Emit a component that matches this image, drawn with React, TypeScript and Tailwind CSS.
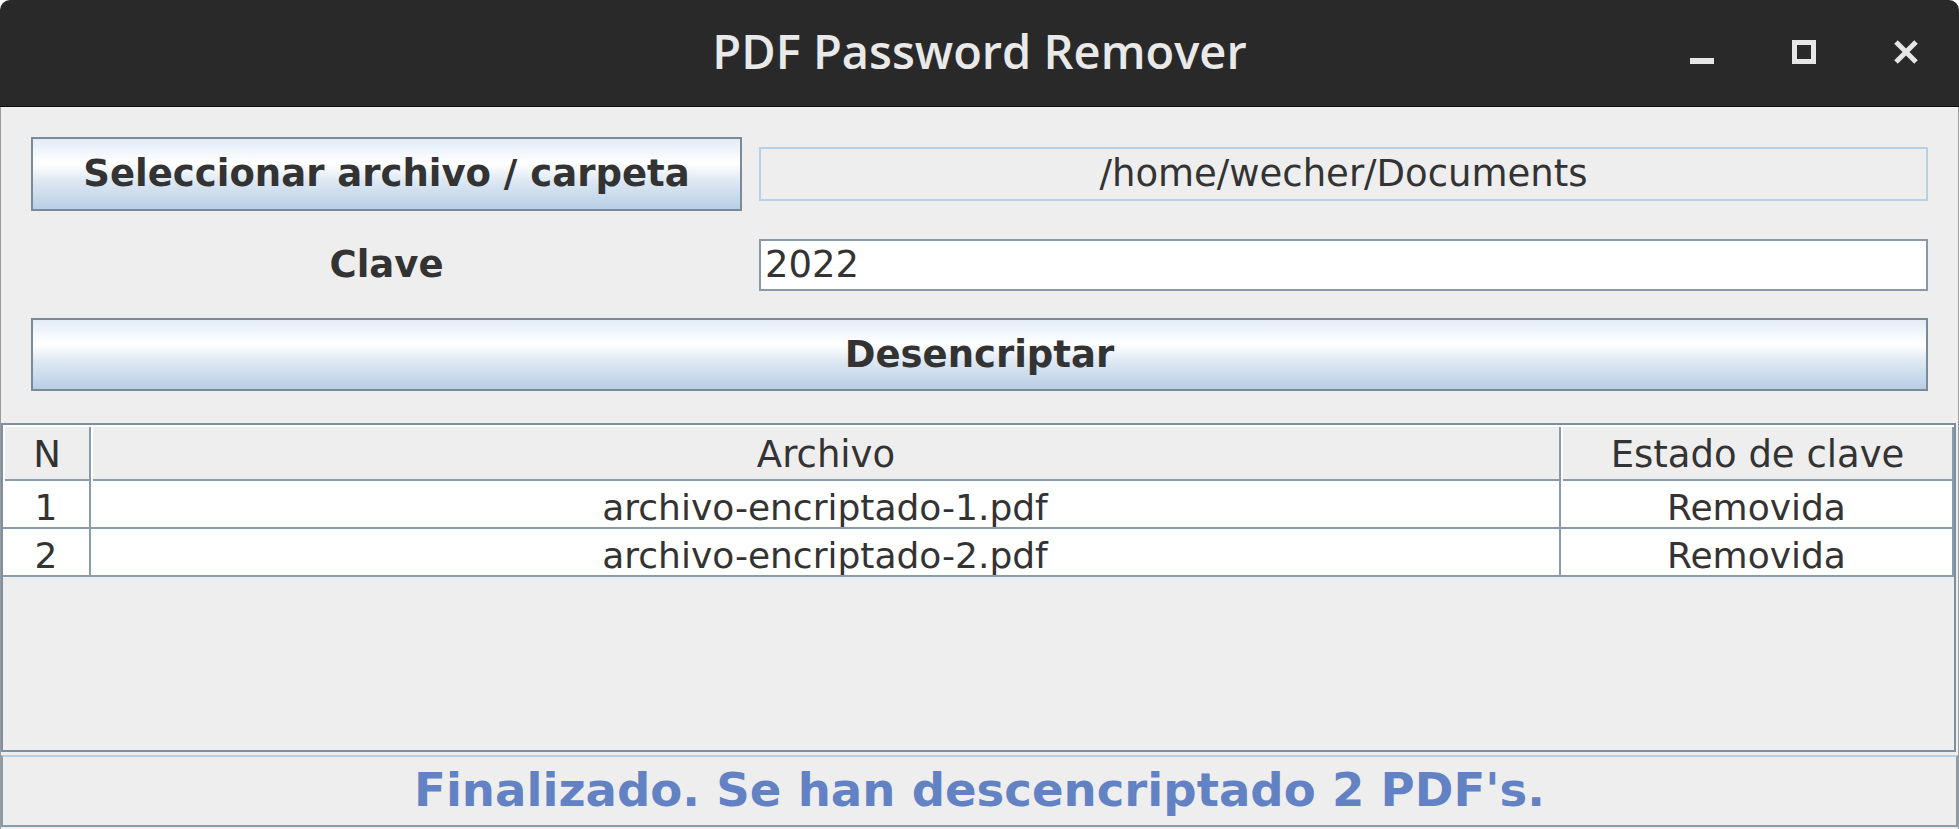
import React from 'react';

const rows = [
  { n: 1, file: 'archivo-encriptado-1.pdf', state: 'Removida' },
  { n: 2, file: 'archivo-encriptado-2.pdf', state: 'Removida' },
];

const metalButton =
  'border-2 border-[#7a8a99] bg-[linear-gradient(to_bottom,#e3ecf6_0%,#fbfdff_30%,#ffffff_36%,#dde8f3_60%,#b8cfe5_100%)] text-[#333333] font-bold text-[37px] flex items-center justify-center';

const WindowControls: React.FC = () => (
  <div className="flex items-center justify-end gap-[76px] pr-[40px]">
    <svg width="26" height="26" viewBox="0 0 26 26">
      <rect x="1" y="18" width="24" height="6" fill="#e6e6e6" />
    </svg>
    <svg width="26" height="26" viewBox="0 0 26 26">
      <rect x="3.5" y="2.5" width="19" height="19" fill="none" stroke="#e6e6e6" strokeWidth="5" />
    </svg>
    <svg width="26" height="26" viewBox="0 0 26 26">
      <path d="M3 2 L23 22 M23 2 L3 22" stroke="#e6e6e6" strokeWidth="5" />
    </svg>
  </div>
);

const App: React.FC = () => {
  return (
    <div className="w-[1959px] h-[829px] bg-white flex flex-col overflow-hidden font-['DejaVu_Sans',sans-serif]">
      <header className="h-[107px] shrink-0 bg-[#292929] rounded-t-[10px] border-b border-[#0e0e0e] grid grid-cols-[1fr_auto_1fr] items-center">
        <div />
        <h1 className="text-[47px] font-semibold text-[#e9e9e9] font-['Open_Sans',sans-serif] pb-[4px]">
          PDF Password Remover
        </h1>
        <WindowControls />
      </header>

      <main className="flex-1 bg-[#eeeeee] border-x border-[#9c9c9c] flex flex-col">
        <div className="px-[30px] pt-[30px] flex flex-col">
          <div className="grid grid-cols-[711px_1fr] gap-x-[17px] items-center h-[74px]">
            <button className={`${metalButton} h-[74px]`}>Seleccionar archivo / carpeta</button>
            <div className="h-[54px] border-2 border-[#b8cfe5] bg-[#eeeeee] flex items-center justify-center text-[37px] text-[#333333]">
              /home/wecher/Documents
            </div>
          </div>

          <div className="grid grid-cols-[711px_1fr] gap-x-[17px] items-center h-[52px] mt-[26px]">
            <label className="text-center font-bold text-[37px] text-[#333333]">Clave</label>
            <div className="h-[52px] border-2 border-[#8a99a8] bg-white flex items-center px-[4px] text-[37px] text-[#333333]">
              2022
            </div>
          </div>

          <button className={`${metalButton} h-[73px] mt-[29px]`}>Desencriptar</button>
        </div>

        <section className="mt-[32px] mr-[2px] h-[329px] border-2 border-[#7f8f9f] flex flex-col text-[36px] text-[#333333]">
          <div className="grid grid-cols-[88px_1470px_1fr] h-[56px] border-t-2 border-t-white border-b-2 border-b-[#8a9bab] bg-[#eeeeee] text-[37px]">
            {['N', 'Archivo', 'Estado de clave'].map((h) => (
              <div
                key={h}
                className="flex items-center justify-center border-l-2 border-l-white border-r-2 border-r-[#8a9bab]"
              >
                {h}
              </div>
            ))}
          </div>
          {rows.map((r) => (
            <div
              key={r.n}
              className="grid grid-cols-[88px_1470px_1fr] h-[48px] bg-white border-b-2 border-b-[#8a9bab]"
            >
              <div className="flex items-center justify-center border-r-2 border-r-[#8a9bab]">{r.n}</div>
              <div className="flex items-center justify-center border-r-2 border-r-[#8a9bab]">{r.file}</div>
              <div className="flex items-center justify-center border-r-2 border-r-[#8a9bab]">{r.state}</div>
            </div>
          ))}
          <div className="flex-1 bg-[#eeeeee]" />
        </section>

        <footer className="mt-[3px] h-[72px] border-2 border-[#8a9bab] border-t-[#b8cfe5] flex items-center justify-center">
          <span className="text-[46.6px] font-bold text-[#6382c4]">Finalizado. Se han descencriptado 2 PDF's.</span>
        </footer>
      </main>
    </div>
  );
};

export default App;
